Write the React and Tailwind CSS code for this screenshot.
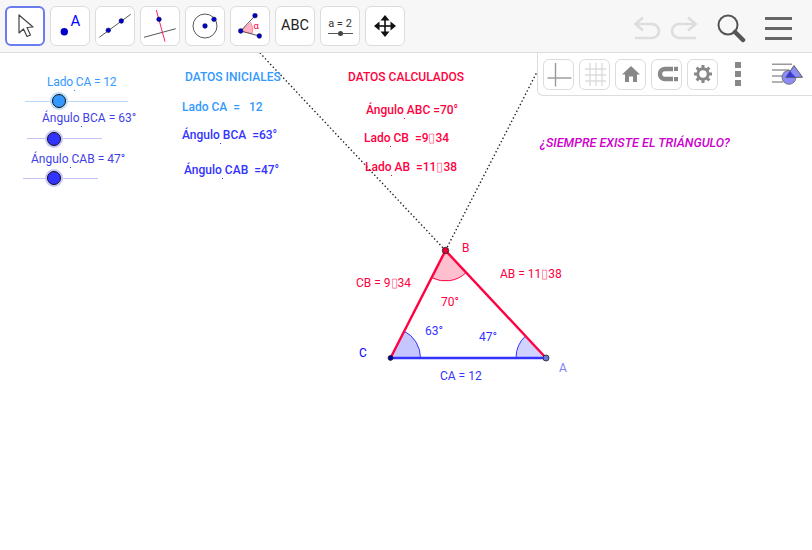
const RED = "#ff0040";
const BLUE = "#3333ff";

function Btn({ active, children }) {
  return (
    <div className={active
      ? "flex h-10 w-10 items-center justify-center rounded-md border-2 border-[#6b7bf0] bg-white"
      : "flex h-10 w-10 items-center justify-center rounded-md border border-[#dcdcdc] bg-white"}>
      {children}
    </div>
  );
}

function Small({ children }) {
  return (
    <div className="flex h-[31px] w-[31px] items-center justify-center rounded-md border border-[#dcdcdc] bg-white">
      {children}
    </div>
  );
}

const Pt = ({ x, y, r = 2.4 }) => <circle cx={x} cy={y} r={r} fill="#0000cc" stroke="#222" strokeWidth="0.4" />;

function Icon({ children }) {
  return <svg width="38" height="38" viewBox="0 0 38 38">{children}</svg>;
}

function Toolbar() {
  return (
    <div className="flex h-[53px] items-start justify-between border-b border-[#dddddd] bg-[#f7f7f7] pl-[5px] pt-[6px]">
      <div className="flex gap-[5px]">
        <Btn active>
          <svg width="36" height="36" viewBox="0 0 36 36">
            <path d="M12 7 L12 25 L16.5 21 L20 28.5 L23.5 27 L20 19.5 L26 19 Z" fill="#fff" stroke="#444" strokeWidth="1.2" strokeLinejoin="round" />
          </svg>
        </Btn>
        <Btn>
          <Icon>
            <circle cx="13.3" cy="24.7" r="3.7" fill="#0000cc" />
            <text x="19.5" y="18.7" fontSize="15" fill="#0000ff" fontFamily="Roboto, sans-serif">A</text>
          </Icon>
        </Btn>
        <Btn>
          <Icon>
            <line x1="3.3" y1="30.3" x2="34.7" y2="7.3" stroke="#444" strokeWidth="0.9" />
            <Pt x="12.3" y="23.3" />
            <Pt x="25.3" y="14" />
          </Icon>
        </Btn>
        <Btn>
          <Icon>
            <line x1="3" y1="30.3" x2="34.7" y2="21.7" stroke="#444" strokeWidth="0.9" />
            <line x1="15.3" y1="3" x2="24" y2="34.7" stroke="#ff2060" strokeWidth="1" />
            <Pt x="18" y="12.3" />
          </Icon>
        </Btn>
        <Btn>
          <Icon>
            <circle cx="19" cy="19" r="12" fill="none" stroke="#444" strokeWidth="0.9" />
            <Pt x="19" y="19" />
            <Pt x="28" y="12.3" />
          </Icon>
        </Btn>
        <Btn>
          <Icon>
            <path d="M9.7 24 L19.7 15.5 A12 12 0 0 1 21.3 26.5 Z" fill="#ffb3c4" stroke="#ff6f90" strokeWidth="0.6" />
            <line x1="9.7" y1="24" x2="24" y2="8.7" stroke="#444" strokeWidth="0.9" />
            <line x1="9.7" y1="24" x2="28.3" y2="29" stroke="#444" strokeWidth="0.9" />
            <Pt x="9.7" y="24" />
            <Pt x="24" y="8.7" />
            <Pt x="28.3" y="29" />
            <text x="22.5" y="22" fontSize="9.5" fill="#ff0040" fontFamily="Roboto, sans-serif">α</text>
          </Icon>
        </Btn>
        <Btn>
          <span className="text-[14.5px] leading-none text-[#222] [font-family:Roboto,sans-serif]">ABC</span>
        </Btn>
        <Btn>
          <div className="flex w-[26px] flex-col items-center">
            <span className="text-[11px] leading-[11px] text-[#333] [font-family:Roboto,sans-serif]">a = 2</span>
            <div className="relative mt-[4px] h-px w-[25px] bg-[#555]">
              <div className="absolute left-[10px] top-[-2px] h-[5px] w-[5px] rounded-full bg-[#444]" />
            </div>
          </div>
        </Btn>
        <Btn>
          <svg width="24" height="24" viewBox="0 0 24 24" fill="#111">
            <rect x="11.2" y="3" width="1.6" height="18" />
            <rect x="3" y="11.2" width="18" height="1.6" />
            <path d="M12 1 L16.5 6.5 L7.5 6.5 Z M12 23 L16.5 17.5 L7.5 17.5 Z M1 12 L6.5 7.5 L6.5 16.5 Z M23 12 L17.5 7.5 L17.5 16.5 Z" />
          </svg>
        </Btn>
      </div>
      <div className="mr-[20px] mt-[7px] flex items-center">
        <svg width="28" height="24" viewBox="0 0 28 24" fill="none" stroke="#dddddd" strokeWidth="2.6">
          <path d="M3 8 H19 A7 7 0 0 1 19 22 H2" />
          <path d="M10 1.5 L2.5 8 L10 14.5" />
        </svg>
        <svg className="ml-[9px]" width="28" height="24" viewBox="0 0 28 24" fill="none" stroke="#dddddd" strokeWidth="2.6">
          <path d="M25 8 H9 A7 7 0 0 0 9 22 H26" />
          <path d="M18 1.5 L25.5 8 L18 14.5" />
        </svg>
        <svg className="ml-[18px]" width="30" height="30" viewBox="0 0 30 30" fill="none">
          <circle cx="12" cy="12" r="9.5" stroke="#555" strokeWidth="2" />
          <line x1="19" y1="19" x2="27" y2="27" stroke="#555" strokeWidth="4.5" strokeLinecap="round" />
        </svg>
        <div className="ml-[19px] flex w-[27px] flex-col gap-[7px]">
          <div className="h-[3px] bg-[#666]" />
          <div className="h-[3px] bg-[#666]" />
          <div className="h-[3px] bg-[#666]" />
        </div>
      </div>
    </div>
  );
}

function StylePanel() {
  return (
    <div className="absolute right-0 top-0 flex h-[43px] w-[275px] items-center rounded-bl-md border-b border-l border-[#dddddd] bg-white pl-[5px]">
      <div className="flex gap-[5px]">
        <Small>
          <svg width="26" height="26" viewBox="0 0 26 26" stroke="#999" strokeWidth="1.4">
            <line x1="1.5" y1="17" x2="25.5" y2="17" /><line x1="9.5" y1="2" x2="9.5" y2="25.5" />
          </svg>
        </Small>
        <Small>
          <svg width="26" height="26" viewBox="0 0 26 26" stroke="#ddd" strokeWidth="1.4">
            <path d="M3 8 H24 M3 14 H24 M3 20 H24 M8 2 V25 M14 2 V25 M20 2 V25" />
          </svg>
        </Small>
        <Small>
          <svg width="20" height="20" viewBox="0 0 20 20" fill="#888">
            <path d="M10 2 L19 10.5 H16 V18 H12 V12.5 H8 V18 H4 V10.5 H1 Z" />
          </svg>
        </Small>
        <Small>
          <svg width="26" height="26" viewBox="0 0 26 26" fill="none">
            <path d="M19 8 H11 A5 5 0 0 0 11 18 H19" stroke="#888" strokeWidth="4.5" />
            <rect x="20" y="5.8" width="4" height="4.2" fill="#888" />
            <rect x="20" y="16" width="4" height="4.2" fill="#888" />
          </svg>
        </Small>
        <Small>
          <svg width="20" height="20" viewBox="0 0 20 20" fill="none">
            <circle cx="10" cy="10" r="5.2" stroke="#888" strokeWidth="3" />
            <path d="M10 1 V4 M10 16 V19 M1 10 H4 M16 10 H19 M3.6 3.6 L5.8 5.8 M14.2 14.2 L16.4 16.4 M3.6 16.4 L5.8 14.2 M14.2 5.8 L16.4 3.6" stroke="#888" strokeWidth="3" />
          </svg>
        </Small>
      </div>
      <div className="ml-[17px] flex flex-col gap-[3px]">
        <div className="h-[6px] w-[6px] bg-[#888]" />
        <div className="h-[6px] w-[6px] bg-[#888]" />
        <div className="h-[6px] w-[6px] bg-[#888]" />
      </div>
      <svg className="ml-[29px]" width="34" height="26" viewBox="0 0 34 26">
        <path d="M2 3.3 H22 M2 9 H19 M2 15 H12 M2 21 H13" stroke="#999" strokeWidth="1.6" />
        <circle cx="19" cy="16.3" r="7" fill="#8c8cf5" stroke="#666" strokeWidth="0.8" />
        <path d="M24 4.5 L32.5 16.3 H16 Z" fill="#8c8cf5" stroke="#555" strokeWidth="0.9" />
        <path d="M20 10 L25.5 16.3 H16 Z" fill="#3a3ad0" />
      </svg>
    </div>
  );
}

function Label({ x, y, color, className, dot, children }) {
  return (
    <span
      style={{ left: x, top: y, color }}
      className={"absolute whitespace-pre leading-[14px] " + (className || "text-[12px]")}
    >
      {children}
      {dot ? <span style={{ left: dot, top: 15, backgroundColor: color }} className="absolute h-px w-px" /> : null}
    </span>
  );
}

function Tofu() {
  return <span className="text-[13px] leading-[0] opacity-60">▯</span>;
}

function Slider({ x, y, w, thumb, color, halo, line }) {
  return (
    <div style={{ left: x, top: y - 0.5, width: w, backgroundColor: line }} className="absolute h-px">
      <div style={{ left: thumb - x - 9, top: -8.5, backgroundColor: halo }} className="absolute flex h-[18px] w-[18px] items-center justify-center rounded-full">
        <div style={{ backgroundColor: color }} className="h-[14px] w-[14px] rounded-full border border-[#111]" />
      </div>
    </div>
  );
}

function Geometry() {
  return (
    <svg className="absolute left-0 top-0" width="812" height="497" viewBox="0 53 812 497">
      <path d="M445.5 250.5 L260 53" stroke="#222" strokeWidth="1.4" strokeDasharray="1.4 2.4" fill="none" />
      <path d="M445.5 250.5 L538 70" stroke="#222" strokeWidth="1.4" strokeDasharray="1.4 2.4" fill="none" />
      <path d="M390.5 358 L420.5 358 A30 30 0 0 0 404 331 Z" fill="#3333ff" fillOpacity="0.28" />
      <path d="M420.5 358 A30 30 0 0 0 404 331" fill="none" stroke="#3333ff" strokeWidth="1" />
      <path d="M546 358 L516 358 A30 30 0 0 1 525.5 336 Z" fill="#3333ff" fillOpacity="0.22" />
      <path d="M516 358 A30 30 0 0 1 525.5 336" fill="none" stroke="#3333ff" strokeWidth="1" />
      <path d="M445.5 250.5 L431.7 277.7 A30 30 0 0 0 466 272.7 Z" fill="#ff0040" fillOpacity="0.25" />
      <path d="M431.7 277.7 A30 30 0 0 0 466 272.7" fill="none" stroke="#ff0040" strokeWidth="1" />
      <line x1="390.5" y1="358" x2="546" y2="358" stroke="#3333ff" strokeWidth="2.4" />
      <line x1="390.5" y1="358" x2="445.5" y2="250.5" stroke="#ff0040" strokeWidth="2.4" />
      <line x1="445.5" y1="250.5" x2="546" y2="358" stroke="#ff0040" strokeWidth="2.4" />
      <circle cx="390.5" cy="358" r="2.4" fill="#0000aa" stroke="#111" strokeWidth="0.8" />
      <circle cx="546" cy="358" r="3" fill="#6a78d8" stroke="#222" strokeWidth="0.8" />
      <circle cx="445.5" cy="250.5" r="3.2" fill="#e8003a" stroke="#222" strokeWidth="0.8" />
    </svg>
  );
}

export default function App() {
  const medium = "text-[12px] font-medium";
  return (
    <div className="flex h-[550px] w-[812px] flex-col overflow-hidden bg-white [font-family:Roboto,sans-serif]">
      <Toolbar />
      <div className="relative flex-1">
        <Geometry />
        <StylePanel />

        <Label x={47} y={22} color="#3399ff" dot={27} className="text-[12px] tracking-[-0.15px]">Lado CA = 12</Label>
        <Slider x={25} y={48} w={103} thumb={59} color="#3399ff" halo="#bcdcf8" line="#b8d8f8" />
        <Label x={42} y={58} color="#3f3fe8" dot={39}>Ángulo BCA = 63°</Label>
        <Slider x={27} y={85.5} w={75} thumb={53.5} color="#3333ff" halo="#c8c8f8" line="#c4c4f8" />
        <Label x={31} y={99} color="#3f3fe8" dot={39}>Ángulo CAB = 47°</Label>
        <Slider x={23} y={125} w={75} thumb={53.5} color="#3333ff" halo="#c8c8f8" line="#c4c4f8" />

        <Label x={185} y={17} color="#3399ff" className={medium}>DATOS INICIALES</Label>
        <Label x={182} y={47} color="#3399ff" className={medium}>{"Lado CA  =   12"}</Label>
        <Label x={182} y={75} color={BLUE} className={medium} dot={38}>{"Ángulo BCA  =63°"}</Label>
        <Label x={184} y={110} color={BLUE} className={medium} dot={38}>{"Ángulo CAB  =47°"}</Label>

        <Label x={348} y={17} color={RED} className={medium}>DATOS CALCULADOS</Label>
        <Label x={366} y={50} color={RED} className={medium} dot={38}>Ángulo ABC =70°</Label>
        <Label x={364} y={78} color={RED} className={medium} dot={26}>{"Lado CB  =9"}<Tofu />34</Label>
        <Label x={365} y={107} color={RED} className={medium} dot={26}>{"Lado AB  =11"}<Tofu />38</Label>

        <Label x={540} y={83} color="#cc00cc" className="text-[12.5px] font-medium italic">¿SIEMPRE EXISTE EL TRIÁNGULO?</Label>

        <Label x={462} y={188} color={RED}>B</Label>
        <Label x={359} y={293} color="#0000ff">C</Label>
        <Label x={559} y={308} color="#8080ff">A</Label>
        <Label x={356} y={223} color={RED}>CB = 9<Tofu />34</Label>
        <Label x={500} y={214} color={RED}>AB = 11<Tofu />38</Label>
        <Label x={441} y={242} color={RED}>70°</Label>
        <Label x={425} y={271} color={BLUE}>63°</Label>
        <Label x={479} y={277} color={BLUE}>47°</Label>
        <Label x={440} y={316} color={BLUE}>CA = 12</Label>
      </div>
    </div>
  );
}
